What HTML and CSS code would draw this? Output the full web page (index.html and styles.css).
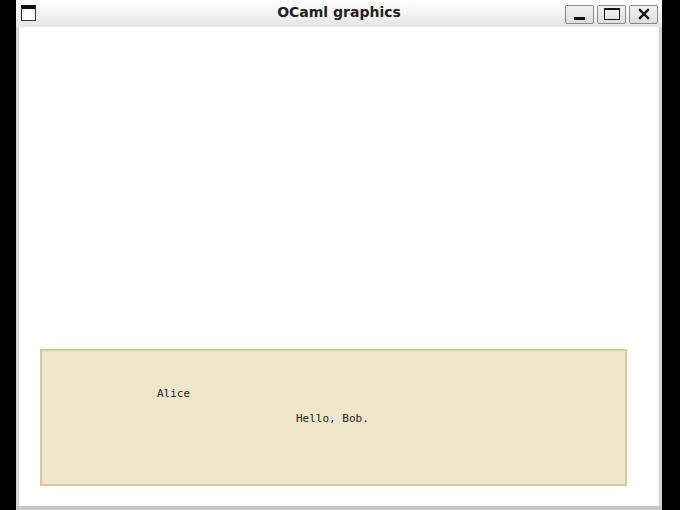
FILE: index.html
```html
<!DOCTYPE html>
<html>
<head>
<meta charset="utf-8">
<link rel="stylesheet" href="styles.css">
</head>
<body>
<div class="window">
  <div class="titlebar">
    <div class="winicon"></div>
    <div class="title">OCaml graphics</div>
    <div class="buttons">
      <div class="btn"><span class="min"></span></div>
      <div class="btn"><span class="max"></span></div>
      <div class="btn">
        <svg width="12" height="12" viewBox="0 0 12 12"><path d="M2 2 L10 10 M10 2 L2 10" stroke="#111" stroke-width="2.4" stroke-linecap="square"/></svg>
      </div>
    </div>
  </div>
  <div class="canvas">
    <div class="panel">
      <div class="line alice">Alice</div>
      <div class="line hello">Hello, Bob.</div>
    </div>
  </div>
  <div class="bottom"></div>
</div>
</body>
</html>
```
FILE: styles.css
```css
html, body {
  margin: 0;
  padding: 0;
  background: #000;
  width: 680px;
  height: 510px;
  overflow: hidden;
}
.window {
  margin-left: 16px;
  width: 646px;
  height: 510px;
  display: flex;
  flex-direction: column;
  background: #e6e6e6;
}
.titlebar {
  height: 27px;
  flex: none;
  display: flex;
  align-items: center;
  position: relative;
  background: linear-gradient(#ffffff, #f6f6f6 40%, #e4e4e4);
}
.winicon {
  margin-left: 5px;
  width: 13px;
  height: 11px;
  border: 1.5px solid #333;
  border-top: 4px solid #111;
  background: #fff;
  margin-top: -2px;
}
.title {
  position: absolute;
  left: 0;
  right: 0;
  top: 4px;
  text-align: center;
  font-family: "DejaVu Sans", sans-serif;
  font-weight: bold;
  font-size: 14px;
  color: #222;
}
.buttons {
  margin-left: auto;
  margin-right: 4px;
  display: flex;
  gap: 3px;
  margin-top: 1px;
}
.btn {
  width: 27px;
  height: 17px;
  border: 1px solid #8a8a8a;
  border-radius: 2px;
  background: linear-gradient(#f4f4f4, #dcdcdc);
  display: flex;
  align-items: center;
  justify-content: center;
  position: relative;
  z-index: 1;
}
.min {
  width: 11px;
  height: 3px;
  background: #111;
  margin-top: 8px;
}
.max {
  width: 14px;
  height: 9px;
  border: 1.5px solid #111;
  border-top-width: 2.5px;
}
.canvas {
  flex: 1;
  background: #fff;
  border-left: 3px solid #d4d4d4;
  border-right: 3px solid #d4d4d4;
  padding: 322px 0 0 21px;
}
.panel {
  width: 583px;
  height: 133px;
  background: #f0e6cb;
  border: 2px solid #d6c79e;
  box-sizing: content-box;
  font-family: "DejaVu Sans Mono", monospace;
  font-size: 11px;
  color: #222;
}
.line {
  height: 13px;
  line-height: 13px;
}
.alice {
  margin-top: 36px;
  margin-left: 115px;
}
.hello {
  margin-top: 12px;
  margin-left: 254px;
}
.bottom {
  height: 4px;
  flex: none;
  background: #c8c8c8;
}
```
